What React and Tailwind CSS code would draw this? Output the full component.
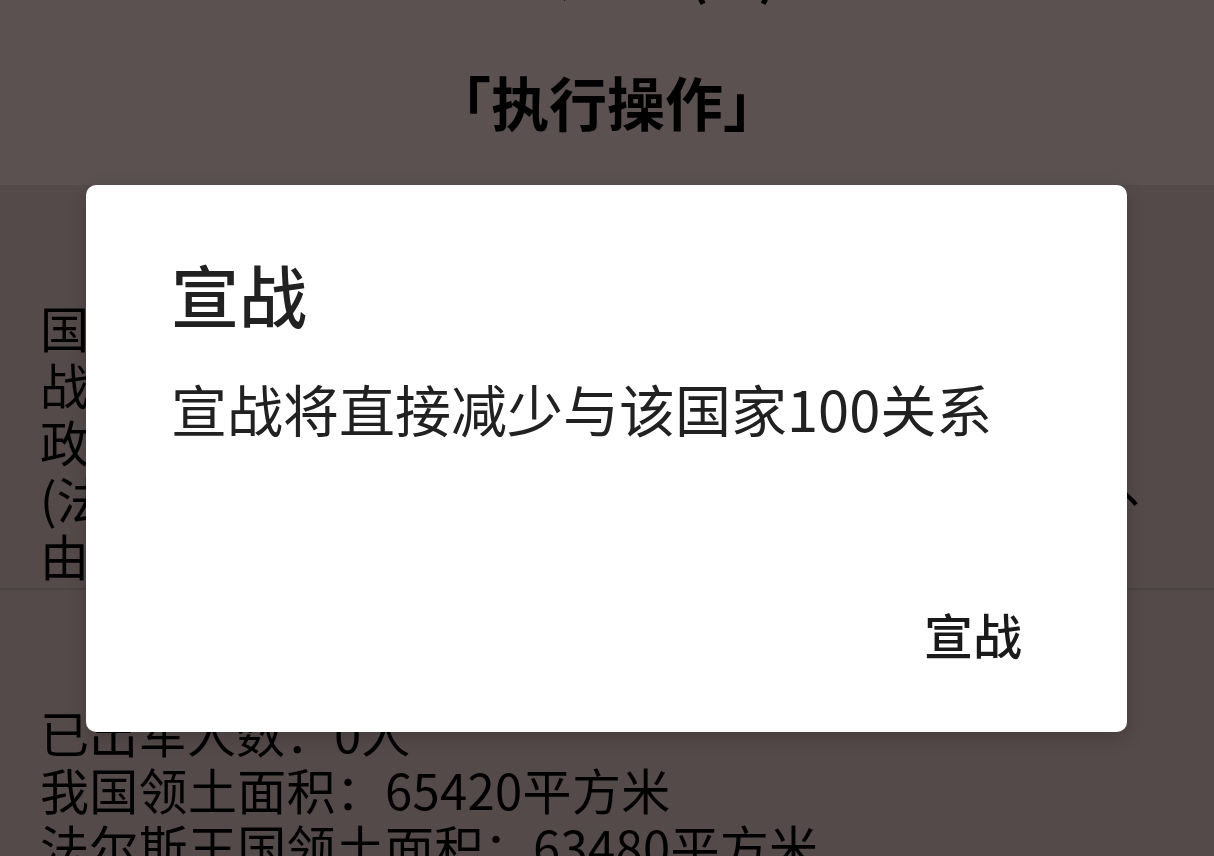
export default function App() {
  return (
    <div className="relative w-[1214px] h-[856px] overflow-hidden bg-[#554a4a] font-['Noto_Sans_CJK_SC','Noto_Sans',sans-serif] text-black">
      {/* header */}
      <div className="h-[185px] bg-[#5a5150] flex flex-col items-center">
        <div className="-mt-[60px] text-[56px] leading-[60px] font-bold scale-x-[0.9] whitespace-nowrap">法尔斯王国(敌)</div>
        <div className="mt-[71px] text-[58px] leading-[60px] font-bold whitespace-nowrap">「执行操作」</div>
      </div>

      {/* info card */}
      <div className="h-[405px] pt-[113px] px-[40px] border-b-2 border-[#4b4242] text-[49px] leading-[57px]">
        <div className="whitespace-nowrap overflow-hidden">国家名称：法尔斯王国</div>
        <div className="whitespace-nowrap overflow-hidden">战争状态：和平</div>
        <div className="whitespace-nowrap overflow-hidden">政治制度：君主制</div>
        <div className="flex justify-between items-start whitespace-nowrap">
          <span>(法尔斯王国)与我国关系：友好</span>
          <span className="pr-[4px] -mt-[16px]">、</span>
        </div>
        <div className="whitespace-nowrap overflow-hidden">由国王统治</div>
      </div>

      {/* stats */}
      <div className="pt-[113px] px-[40px] text-[49px] leading-[57px]">
        <div className="whitespace-nowrap">已出军人数：0人</div>
        <div className="whitespace-nowrap tracking-[0.3px]">我国领土面积：65420平方米</div>
        <div className="whitespace-nowrap tracking-[0.3px]">法尔斯王国领土面积：63480平方米</div>
      </div>

      {/* dialog */}
      <div className="absolute left-[86px] top-[185px] w-[1041px] bg-white rounded-[10px] flex flex-col pt-[69px] pb-[70px] pl-[85px] pr-[105px] shadow-[0_6px_18px_rgba(0,0,0,0.18)]">
        <div className="text-[68px] leading-[80px] font-medium text-[#212121]">宣战</div>
        <div className="mt-[41px] text-[56px] leading-[66px] text-[#212121] whitespace-nowrap">宣战将直接减少与该国家100关系</div>
        <div className="mt-[164px] flex justify-end">
          <span className="text-[49px] leading-[57px] font-medium text-[#1a1a1a]">宣战</span>
        </div>
      </div>
    </div>
  );
}
